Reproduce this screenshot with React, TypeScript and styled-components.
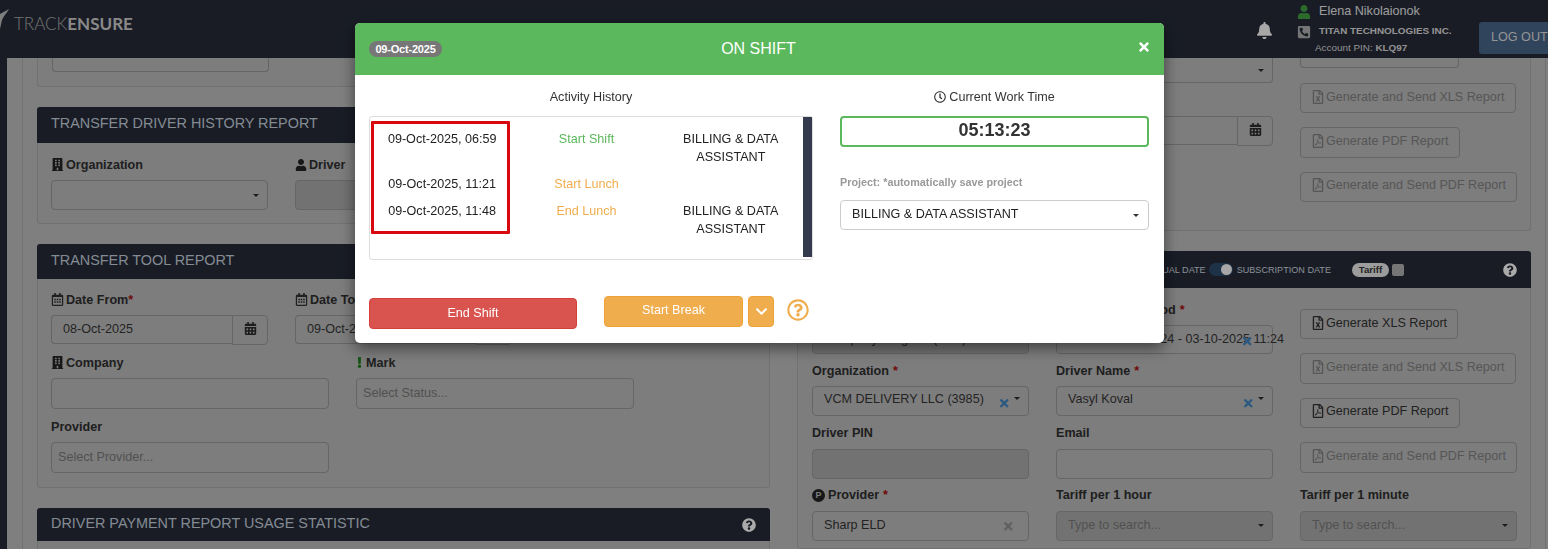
import React from "react";
import styled, { createGlobalStyle } from "styled-components";
import {
  FaBell, FaBuilding, FaCalendarAlt, FaRegCalendarAlt, FaChevronDown, FaExclamation,
  FaRegFileExcel, FaRegFilePdf, FaQuestionCircle, FaRegQuestionCircle, FaTimes, FaUser, FaPhoneSquareAlt, FaRegClock,
} from "react-icons/fa";

const Global = createGlobalStyle`
  html, body { margin: 0; height: 549px; overflow: hidden; background: #b7b7b7; }
  body { font-family: "Liberation Sans", Arial, sans-serif; color: #2d2d2d; }
  * { box-sizing: border-box; }
`;

const TopBar = styled.header`
  height: 58px; background: #242936; display: flex; align-items: flex-start; overflow: hidden;
`;
const Logo = styled.div`
  display: flex; align-items: flex-start; height: 58px; flex: 1;
  svg { margin-top: 9px; }
`;
const LogoText = styled.div`
  margin: 14px 0 0 5px; font-family: Lato, sans-serif; font-size: 17px; line-height: 20px; font-weight: 300; color: #a5a5a5;
  b { font-weight: 700; color: #c4c4c4; }
`;
const Bell = styled.div`
  margin: 22px 24px 0 0; color: #efefef; font-size: 17px; line-height: 0;
`;
const UserBlock = styled.div`
  width: 182px; height: 58px; position: relative; display: grid; grid-template-columns: 22px 1fr; align-content: start;
`;
const UserIcon = styled.div<{ $c: string; $t: number }>`
  color: ${(p) => p.$c}; line-height: 0; margin-top: ${(p) => p.$t}px; text-align: left;
`;
const UserName = styled.div`
  font-size: 12.6px; line-height: 14px; color: #e0e0e0; margin-top: 4px;
`;
const UserCompany = styled.div`
  font-size: 9.9px; font-weight: 700; line-height: 12px; color: #d5d5d5; margin-top: 6px;
`;
const UserPin = styled.div`
  grid-column: 1 / 3; font-size: 9.9px; line-height: 12px; color: #d0d0d0; padding-left: 18px; margin-top: 3px;
  b { font-weight: 700; }
`;
const LogOut = styled.div`
  width: 80px; height: 32px; margin: 22px -11px 0 0; flex: none; border-radius: 3px; background: #456285;
  color: #d5d5d5; font-size: 12.6px; line-height: 30px; padding-left: 12px; white-space: nowrap;
`;

const Shell = styled.main`
  height: 491px; border-left: 7px solid #242936; overflow: hidden; background: #b7b7b7;
`;
const Content = styled.div`
  margin-left: 15px; width: 1524px; height: 491px; border-left: 1px solid #a3a3a3; border-right: 1px solid #a3a3a3; padding: 0 0 0 14px;
  display: grid; grid-template-columns: 733px 734px; column-gap: 27px; align-items: start;
`;
const Column = styled.div`
  display: flex; flex-direction: column; gap: 20px; min-width: 0;
`;
const Panel = styled.section`
  background: #b3b3b3; border: 1px solid #a3a3a3; border-radius: 3px; overflow: visible; position: relative;
`;
const OpenPanel = styled(Panel)<{ $h: number }>`
  height: ${(p) => p.$h}px; border-top: 0; border-radius: 0 0 3px 3px;
  padding: 0 14px;
`;
const PanelHead = styled.div<{ $h: number }>`
  height: ${(p) => p.$h}px; margin: -1px -1px 0; background: #242936; border-radius: 3px 3px 0 0; padding: 0 14px 4px;
  display: flex; align-items: center; justify-content: space-between;
  color: #bdc7d2; font-size: 14.4px; white-space: nowrap;
`;
const Help = styled.span`
  color: #f4f4f4; line-height: 0; font-size: 14px; margin-top: 4px;
`;
const PanelBody = styled.div<{ $h: number; $pt?: number }>`
  height: ${(p) => p.$h}px; padding: ${(p) => p.$pt ?? 12}px 13px 0;
`;
const Grid3 = styled.div`
  display: grid; grid-template-columns: 217px 217px 217px; column-gap: 27px; row-gap: 8.3px;
`;
const Grid2 = styled.div`
  display: grid; grid-template-columns: 278px 278px; column-gap: 27px; row-gap: 9px; margin-top: 9px;
`;
const Field = styled.div`
  min-width: 0;
`;
const Label = styled.div`
  height: 16px; padding-top: 1px; margin-bottom: 8px; font-size: 12.6px; line-height: 16px; font-weight: 700; color: #2d2d2d; white-space: nowrap;
  display: flex; align-items: center; gap: 2px;
  svg { flex: none; }
  i { font-style: normal; color: #a01010; margin-left: 2px; }
`;
const Control = styled.div<{ $dis?: boolean; $h?: number }>`
  height: ${(p) => p.$h ?? 30}px; border: 1px solid #929292; border-radius: 4px;
  background: ${(p) => (p.$dis ? "#a4a4a4" : "#b3b3b3")};
  display: flex; align-items: center; padding: 0 8px 0 11px; font-size: 12.6px; color: #3a3a3a; white-space: nowrap; position: relative;
`;
const Stub = styled(Control)`
  border-top: 0; border-radius: 0 0 4px 4px;
`;
const Value = styled.span<{ $ph?: boolean; $up?: boolean }>`
  flex: 1; min-width: 0; overflow: hidden; text-overflow: clip; padding-bottom: ${(p) => (p.$up ? 4 : 2)}px;
  color: ${(p) => (p.$ph ? "#757575" : "#333")};
`;
const Caret = styled.span<{ $up?: boolean }>`
  flex: none; width: 0; height: 0; border-left: 3px solid transparent; border-right: 3px solid transparent; border-top: 3px solid #2a2a2a; margin-left: 4px;
  margin-bottom: ${(p) => (p.$up ? 5 : 0)}px;
`;
const Clear = styled.span<{ $c: string }>`
  flex: none; line-height: 0; font-size: 12.5px; color: ${(p) => p.$c}; margin-top: 4px; position: relative;
`;
const PeriodText = styled.span`
  position: absolute; right: -12px; top: 6px; color: #333;
`;
const DateGroup = styled.div`
  display: flex; height: 30px;
`;
const DateInput = styled(Control)`
  flex: 1; border-radius: 4px 0 0 4px; border-right: 0; height: 29px;
`;
const DateAddon = styled.div`
  width: 36px; border: 1px solid #929292; border-radius: 0 4px 4px 0; color: #2a2a2a; display: flex; align-items: center; justify-content: center; line-height: 0; font-size: 13px; padding-bottom: 4px;
`;
const Disc = styled.span`
  width: 13px; height: 13px; border-radius: 50%; background: #222; color: #b3b3b3; font-size: 9px; font-weight: 700; line-height: 13px; text-align: center; margin-right: 1px;
`;
const ButtonStack = styled.div<{ $top?: number }>`
  grid-row: span 3; display: flex; flex-direction: column; align-items: flex-start; gap: 14px; padding-top: ${(p) => p.$top ?? 0}px;
`;
const ReportButton = styled.div<{ $off?: boolean }>`
  height: 30.4px; padding: 0 10px 3px; border: 1px solid #929292; border-radius: 4px;
  display: flex; align-items: center; gap: 1px; font-size: 12.6px; white-space: nowrap; color: ${(p) => (p.$off ? "#7c7c7c" : "#303030")};
  svg { flex: none; font-size: 14px; }
`;
const ButtonStub = styled.div`
  width: 159px; height: 10px; border: 1px solid #929292; border-top: 0; border-radius: 0 0 4px 4px;
`;
const HeadControls = styled.div`
  display: flex; align-items: center; margin-left: auto; font-size: 9.1px; color: #c6d0da; margin-top: 4px;
`;
const Toggle = styled.span`
  width: 24px; height: 13px; border-radius: 7px; background: #2a4766; position: relative; margin: 0 4px 0 3px; display: inline-block;
  &::after { content: ""; position: absolute; right: 1px; top: 1px; width: 11px; height: 11px; border-radius: 50%; background: #f0f0f0; }
`;
const Pill = styled.span`
  margin-left: 21px; width: 37px; height: 14px; border-radius: 8px; background: #e0e0e0; color: #333; font-weight: 700; text-align: center; line-height: 13px; font-size: 9.7px;
`;
const Check = styled.span`
  width: 12px; height: 12px; margin: 0 99px 0 3px; background: #aaa; border-radius: 2px;
`;

const Overlay = styled.div`
  position: fixed; inset: 0; background: rgba(0, 0, 0, 0.3); padding: 23px 0 0 355px;
`;
const Modal = styled.div`
  width: 809px; height: 320px; background: #fff; border-radius: 5px; overflow: hidden; box-shadow: 0 5px 15px rgba(0,0,0,.5); color: #333;
  font-size: 12.6px;
`;
const ModalHead = styled.div`
  height: 52px; background: #5cb85c; display: grid; grid-template-columns: 1fr auto 1fr; align-items: center; padding: 0 14px;
  color: #fff;
`;
const DateBadge = styled.span`
  justify-self: start; height: 16px; width: 73px; border-radius: 8px; background: #777; color: #fff; font-size: 11px; line-height: 16px; font-weight: 700; text-align: center; letter-spacing: -0.2px;
`;
const ModalTitle = styled.div`
  font-size: 16px; padding-right: 2px; margin-left: 0;
`;
const Close = styled.span`
  justify-self: end; font-size: 14px; line-height: 0; margin: 0 -1px 4px 0;
  svg { display: block; }
`;
const ModalBody = styled.div`
  padding: 14px 15px 0 14px; display: grid; grid-template-columns: 444px 309px; column-gap: 27px; height: 221px;
`;
const ColTitle = styled.div`
  height: 16px; line-height: 16px; text-align: center; margin-bottom: 11px; font-size: 12.6px; color: #333;
  display: flex; justify-content: center; align-items: center; gap: 3px;
`;
const HistoryBox = styled.div`
  position: relative; height: 144px; border: 1px solid #ddd; border-radius: 3px; display: flex; align-items: flex-start;
`;
const HistoryList = styled.div`
  flex: 1; padding-top: 13px; display: flex; flex-direction: column; gap: 9px;
`;
const HistoryRow = styled.div`
  display: grid; grid-template-columns: repeat(3, 1fr); text-align: center; line-height: 18px; font-size: 12.6px; color: #222;
`;
const TimeCell = styled.div`
  white-space: nowrap;
`;
const Activity = styled.div<{ $c: string }>`
  color: ${(p) => p.$c};
`;
const ScrollThumb = styled.div`
  width: 9px; height: 140px; background: #333b4c; flex: none;
`;
const Annotation = styled.div`
  position: absolute; left: 1px; top: 4px; width: 139px; height: 113px; border: 3px solid #d8080e; border-radius: 1px; pointer-events: none;
`;
const Timer = styled.div`
  height: 31px; border: 2px solid #5cb85c; border-radius: 4px; text-align: center; font-size: 18px; line-height: 25px; font-weight: 700; color: #333;
`;
const ProjectLabel = styled.div`
  margin-top: 28px; font-size: 10.8px; line-height: 14px; font-weight: 700; color: #999;
`;
const ProjectSelect = styled.div`
  margin-top: 11px; height: 30px; border: 1px solid #ccc; border-radius: 4px; display: flex; align-items: center; justify-content: space-between; padding: 0 9px 3px 11px; font-size: 12.6px; color: #222;
`;
const DarkCaret = styled(Caret)`
  border-top-color: #333; margin-top: 3px;
`;
const ModalFoot = styled.div`
  display: flex; align-items: flex-start; padding-left: 14px;
`;
const EndShift = styled.div`
  width: 208px; height: 31px; margin-top: 2px; background: #d9534f; border: 1px solid #d43f3a; border-radius: 4px; color: #fff; text-align: center; line-height: 28px; font-size: 12.6px;
`;
const BreakButton = styled.div`
  margin-left: 27px; width: 139px; height: 31px; background: #f0ad4e; border: 1px solid #eea236; border-radius: 4px; color: #fff; text-align: center; line-height: 26px; font-size: 12.6px;
`;
const ChevronButton = styled.div`
  margin-left: 5px; width: 26px; height: 31px; background: #f0ad4e; border: 1px solid #eea236; border-radius: 4px; color: #fff; display: flex; align-items: center; justify-content: center; font-size: 13px;
`;
const ModalHelp = styled.div`
  margin: 3px 0 0 13px; color: #f0ad4e; font-size: 22px; line-height: 0;
`;

const LogoMark = () => (
  <svg width="9" height="22" viewBox="0 0 9 22">
    <path d="M9 0 L0 5 L0 20 L2 11 C3 8 6 5 9 0 Z" fill="#b5b5b5" />
  </svg>
);

const Xls = () => <FaRegFileExcel />;
const Pdf = () => <FaRegFilePdf />;
const Cal = () => <FaRegCalendarAlt size={13} />;
const Org = () => <FaBuilding size={13} color="#222" />;

export default function App() {
  return (
    <>
      <Global />
      <TopBar>
        <Logo>
          <LogoMark />
          <LogoText>TRACK<b>ENSURE</b></LogoText>
        </Logo>
        <Bell><FaBell /></Bell>
        <UserBlock>
          <UserIcon $c="#3f9a3f" $t={5}><FaUser size={14} /></UserIcon>
          <UserName>Elena Nikolaionok</UserName>
          <UserIcon $c="#a8a8a8" $t={6}><FaPhoneSquareAlt size={14} /></UserIcon>
          <UserCompany>TITAN TECHNOLOGIES INC.</UserCompany>
          <UserPin>Account PIN: <b>KLQ97</b></UserPin>
        </UserBlock>
        <LogOut>LOG OUT</LogOut>
      </TopBar>
      <Shell>
        <Content>
          <Column>
            <OpenPanel $h={29}>
              <Stub $h={14} style={{ width: 217 }} />
            </OpenPanel>
            <Panel>
              <PanelHead $h={36}>TRANSFER DRIVER HISTORY REPORT</PanelHead>
              <PanelBody $h={80} $pt={13}>
                <Grid3>
                  <Field>
                    <Label><Org />Organization</Label>
                    <Control><Value /><Caret /></Control>
                  </Field>
                  <Field>
                    <Label><FaUser size={12} color="#222" />Driver</Label>
                    <Control $dis />
                  </Field>
                </Grid3>
              </PanelBody>
            </Panel>
            <Panel>
              <PanelHead $h={35}>TRANSFER TOOL REPORT</PanelHead>
              <PanelBody $h={208} $pt={12}>
                <Grid3>
                  <Field>
                    <Label><Cal />Date From<i style={{ marginLeft: -2 }}>*</i></Label>
                    <DateGroup>
                      <DateInput><Value>08-Oct-2025</Value></DateInput>
                      <DateAddon><FaCalendarAlt /></DateAddon>
                    </DateGroup>
                  </Field>
                  <Field>
                    <Label><Cal />Date To<i style={{ marginLeft: -2 }}>*</i></Label>
                    <DateGroup>
                      <DateInput><Value>09-Oct-2025</Value></DateInput>
                      <DateAddon><FaCalendarAlt /></DateAddon>
                    </DateGroup>
                  </Field>
                </Grid3>
                <Grid2>
                  <Field>
                    <Label><Org />Company</Label>
                    <Control $h={31} />
                  </Field>
                  <Field>
                    <Label><FaExclamation size={11} color="#1d7a1d" style={{ marginLeft: -2, marginRight: -1 }} />Mark</Label>
                    <Control $h={31} style={{ paddingLeft: 6 }}><Value $ph>Select Status...</Value></Control>
                  </Field>
                  <Field>
                    <Label>Provider</Label>
                    <Control $h={31} style={{ paddingLeft: 6 }}><Value $ph>Select Provider...</Value></Control>
                  </Field>
                </Grid2>
              </PanelBody>
            </Panel>
            <Panel>
              <PanelHead $h={33}>
                DRIVER PAYMENT REPORT USAGE STATISTIC
                <Help><FaQuestionCircle /></Help>
              </PanelHead>
              <PanelBody $h={40} />
            </Panel>
          </Column>
          <Column>
            <OpenPanel $h={173}>
              <Grid3>
                <Field />
                <Field>
                  <Stub $h={25}><Value /><Caret /></Stub>
                  <div style={{ height: 33 }} />
                  <DateGroup>
                    <DateInput />
                    <DateAddon><FaCalendarAlt /></DateAddon>
                  </DateGroup>
                </Field>
                <ButtonStack style={{ gridRow: "auto" }}>
                  <ButtonStub />
                  <ReportButton $off style={{ marginTop: 1 }}><Xls />Generate and Send XLS Report</ReportButton>
                  <ReportButton $off><Pdf />Generate PDF Report</ReportButton>
                  <ReportButton $off><Pdf />Generate and Send PDF Report</ReportButton>
                </ButtonStack>
              </Grid3>
            </OpenPanel>
            <Panel>
              <PanelHead $h={37}>
                <HeadControls>
                  ACTUAL DATE<Toggle />SUBSCRIPTION DATE
                  <Pill>Tariff</Pill>
                  <Check />
                </HeadControls>
                <Help><FaQuestionCircle /></Help>
              </PanelHead>
              <PanelBody $h={260} $pt={13} style={{ paddingLeft: 14 }}>
                <Grid3>
                  <Field>
                    <Label>Program</Label>
                    <Control $dis $h={29}><Value>Company Program (ELD)</Value></Control>
                  </Field>
                  <Field>
                    <Label>Subscription Period <i>*</i></Label>
                    <Control $h={29}>
                      <PeriodText>03-10-2024 11:24 - 03-10-2025 11:24</PeriodText>
                      <Value />
                      <Clear $c="#3f80ba" style={{ marginRight: 11 }}><FaTimes /></Clear>
                    </Control>
                  </Field>
                  <ButtonStack $top={8}>
                    <ReportButton><Xls />Generate XLS Report</ReportButton>
                    <ReportButton $off><Xls />Generate and Send XLS Report</ReportButton>
                    <ReportButton><Pdf />Generate PDF Report</ReportButton>
                    <ReportButton $off><Pdf />Generate and Send PDF Report</ReportButton>
                  </ButtonStack>
                  <Field>
                    <Label>Organization <i>*</i></Label>
                    <Control><Value $up>VCM DELIVERY LLC (3985)</Value><Clear $c="#3f80ba"><FaTimes /></Clear><Caret $up /></Control>
                  </Field>
                  <Field>
                    <Label>Driver Name <i>*</i></Label>
                    <Control><Value $up>Vasyl Koval</Value><Clear $c="#3f80ba"><FaTimes /></Clear><Caret $up /></Control>
                  </Field>
                  <Field>
                    <Label>Driver PIN</Label>
                    <Control $dis />
                  </Field>
                  <Field>
                    <Label>Email</Label>
                    <Control />
                  </Field>
                  <Field>
                    <Label><Disc>P</Disc>Provider <i>*</i></Label>
                    <Control style={{ paddingRight: 14 }}><Value>Sharp ELD</Value><Clear $c="#8a8a8a" style={{ marginTop: 0 }}><FaTimes /></Clear></Control>
                  </Field>
                  <Field>
                    <Label>Tariff per 1 hour</Label>
                    <Control $dis><Value $ph>Type to search...</Value><Caret /></Control>
                  </Field>
                  <Field>
                    <Label>Tariff per 1 minute</Label>
                    <Control $dis><Value $ph>Type to search...</Value><Caret /></Control>
                  </Field>
                </Grid3>
              </PanelBody>
            </Panel>
          </Column>
        </Content>
      </Shell>
      <Overlay>
        <Modal>
          <ModalHead>
            <DateBadge>09-Oct-2025</DateBadge>
            <ModalTitle>ON SHIFT</ModalTitle>
            <Close><FaTimes /></Close>
          </ModalHead>
          <ModalBody>
            <div>
              <ColTitle>Activity History</ColTitle>
              <HistoryBox>
                <HistoryList>
                  <HistoryRow>
                    <TimeCell>09-Oct-2025, 06:59</TimeCell>
                    <Activity $c="#5cb85c">Start Shift</Activity>
                    <div>BILLING &amp; DATA ASSISTANT</div>
                  </HistoryRow>
                  <HistoryRow>
                    <TimeCell>09-Oct-2025, 11:21</TimeCell>
                    <Activity $c="#f0ad4e">Start Lunch</Activity>
                    <div />
                  </HistoryRow>
                  <HistoryRow>
                    <TimeCell>09-Oct-2025, 11:48</TimeCell>
                    <Activity $c="#f0ad4e">End Lunch</Activity>
                    <div>BILLING &amp; DATA ASSISTANT</div>
                  </HistoryRow>
                </HistoryList>
                <ScrollThumb />
                <Annotation />
              </HistoryBox>
            </div>
            <div>
              <ColTitle><FaRegClock size={12} />Current Work Time</ColTitle>
              <Timer>05:13:23</Timer>
              <ProjectLabel>Project: *automatically save project</ProjectLabel>
              <ProjectSelect>BILLING &amp; DATA ASSISTANT<DarkCaret /></ProjectSelect>
            </div>
          </ModalBody>
          <ModalFoot>
            <EndShift>End Shift</EndShift>
            <BreakButton>Start Break</BreakButton>
            <ChevronButton><FaChevronDown /></ChevronButton>
            <ModalHelp><FaRegQuestionCircle /></ModalHelp>
          </ModalFoot>
        </Modal>
      </Overlay>
    </>
  );
}
